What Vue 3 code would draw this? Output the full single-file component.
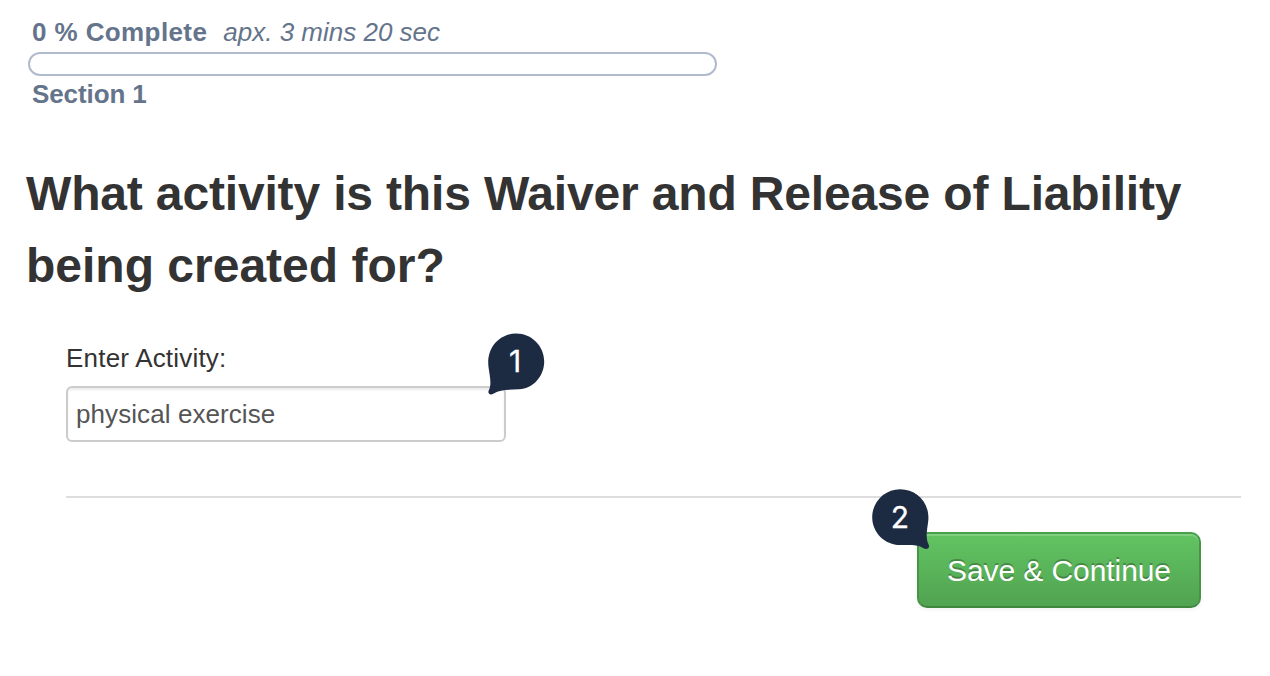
<template>
  <main class="interview">
    <header class="progress">
      <p class="progress-status">
        <strong>{{ percent }} % Complete</strong>
        <em>{{ timeLeft }}</em>
      </p>
      <div class="progress-bar">
        <div class="progress-fill" :style="{ width: percent + '%' }"></div>
      </div>
      <p class="progress-section">Section 1</p>
    </header>

    <h1 class="question">
      <span class="line-one">What activity is this Waiver and Release of Liability</span>
      <span class="line-two">being created for?</span>
    </h1>

    <form class="answer" @submit.prevent>
      <label for="activity">Enter Activity:</label>
      <div class="field">
        <input id="activity" v-model="activity" type="text" />
        <div class="marker marker-one">
          <svg viewBox="0 0 58 63" width="58" height="63">
            <path d="M29.200 .5C44.700 .5 57.200 13 57.200 28.500C57.200 43 46.500 55.600 32 56.300C21 56.900 13 56.500 6.800 60.400C3.500 62.900 .4 60.700 1.700 57.500C5 51 2.700 43 1.500 34C-.8 15 12 .5 29.200 .5Z" />
          </svg>
          <span>1</span>
        </div>
      </div>

      <div class="actions">
        <button type="submit">Save &amp; Continue</button>
        <div class="marker marker-two">
          <svg viewBox="0 0 58 63" width="58" height="63">
            <path d="M29.200 .3C13.700 .3 1.200 12.800 1.200 28.300S13.700 56 29.200 56.100C39 56.200 46 55.400 52 58.900C55.300 61.200 59.200 59.400 57.800 56C54.500 50 55.800 42 57 34C60 15 46.500 .3 29.200 .3Z" />
          </svg>
          <span>2</span>
        </div>
      </div>
    </form>
  </main>
</template>

<script setup>
import { ref } from 'vue'

const percent = ref(0)
const timeLeft = 'apx. 3 mins 20 sec'
const activity = ref('physical exercise')
</script>

<style>
body {
  background: #fff;
}
</style>

<style scoped>
.interview {
  box-sizing: border-box;
  height: 676px;
  padding: 18px 29px 0 26px;
  color: #333;
  font-family: 'Helvetica Neue', 'Liberation Sans', Arial, sans-serif;
  font-size: 26px;
  overflow: hidden;
}

.progress {
  width: 689px;
  margin-left: 2px;
  color: #64748b;
}

.progress p {
  margin: 0 0 0 4px;
  line-height: 28px;
  white-space: nowrap;
}

.progress-status {
  display: flex;
  gap: 16px;
}

.progress-status strong {
  letter-spacing: 0.4px;
}

.progress-bar {
  box-sizing: border-box;
  height: 24px;
  margin: 6px 0 4px;
  border: 2px solid #b1bbcf;
  border-radius: 12px;
  overflow: hidden;
}

.progress-fill {
  height: 100%;
  background: #b1bbcf;
}

.progress-section {
  font-weight: bold;
  letter-spacing: -0.1px;
}

.question {
  margin: 50px 0 0;
  font-size: 48px;
  line-height: 72px;
  white-space: nowrap;
}

.question span {
  display: block;
}

.line-one {
  letter-spacing: -0.16px;
}

/* Form */
.answer {
  margin-left: 40px;
}

.answer label {
  display: block;
  margin-top: 42px;
  line-height: 28px;
  letter-spacing: 0.2px;
}

.field {
  position: relative;
  width: 440px;
  margin-top: 14px;
}

.field input {
  display: block;
  box-sizing: border-box;
  width: 440px;
  height: 56px;
  padding: 0 8px;
  border: 2px solid #ccc;
  border-radius: 6px;
  background: #fff;
  color: #555;
  font: inherit;
  letter-spacing: 0.08px;
  outline: none;
  box-shadow: inset 0 2px 2px rgba(0, 0, 0, 0.075);
}

.actions {
  position: relative;
  display: flex;
  justify-content: flex-end;
  margin-top: 54px;
  padding: 34px 40px 0 0;
  border-top: 2px solid #ddd;
}

.actions button {
  box-sizing: border-box;
  width: 284px;
  height: 76px;
  padding: 2px 0 0;
  border: 2px solid;
  border-color: #4a9f4a #479447 #3f873f;
  border-radius: 10px;
  background: linear-gradient(#62c462, #51a351);
  box-shadow: inset 0 2px 0 rgba(255, 255, 255, 0.2), 0 2px 4px rgba(0, 0, 0, 0.05);
  color: #fff;
  font-family: inherit;
  font-size: 30px;
  letter-spacing: -0.08px;
  text-shadow: 0 -2px 0 rgba(0, 0, 0, 0.25);
  white-space: nowrap;
}

/* Numbered callouts */
.marker {
  position: absolute;
  width: 58px;
  height: 63px;
}

.marker svg {
  display: block;
  fill: #1d2b42;
}

.marker span {
  position: absolute;
  inset: 0;
  color: #fff;
  font-family: Inter, sans-serif;
  font-size: 30px;
  line-height: 56px;
  text-align: center;
  -webkit-text-stroke: 0.3px #fff;
}

.marker-one {
  top: -53px;
  left: 421px;
}

.marker-one span {
  left: -1px;
  right: 1px;
}

.marker-two {
  top: -9px;
  left: 805px;
}
</style>
